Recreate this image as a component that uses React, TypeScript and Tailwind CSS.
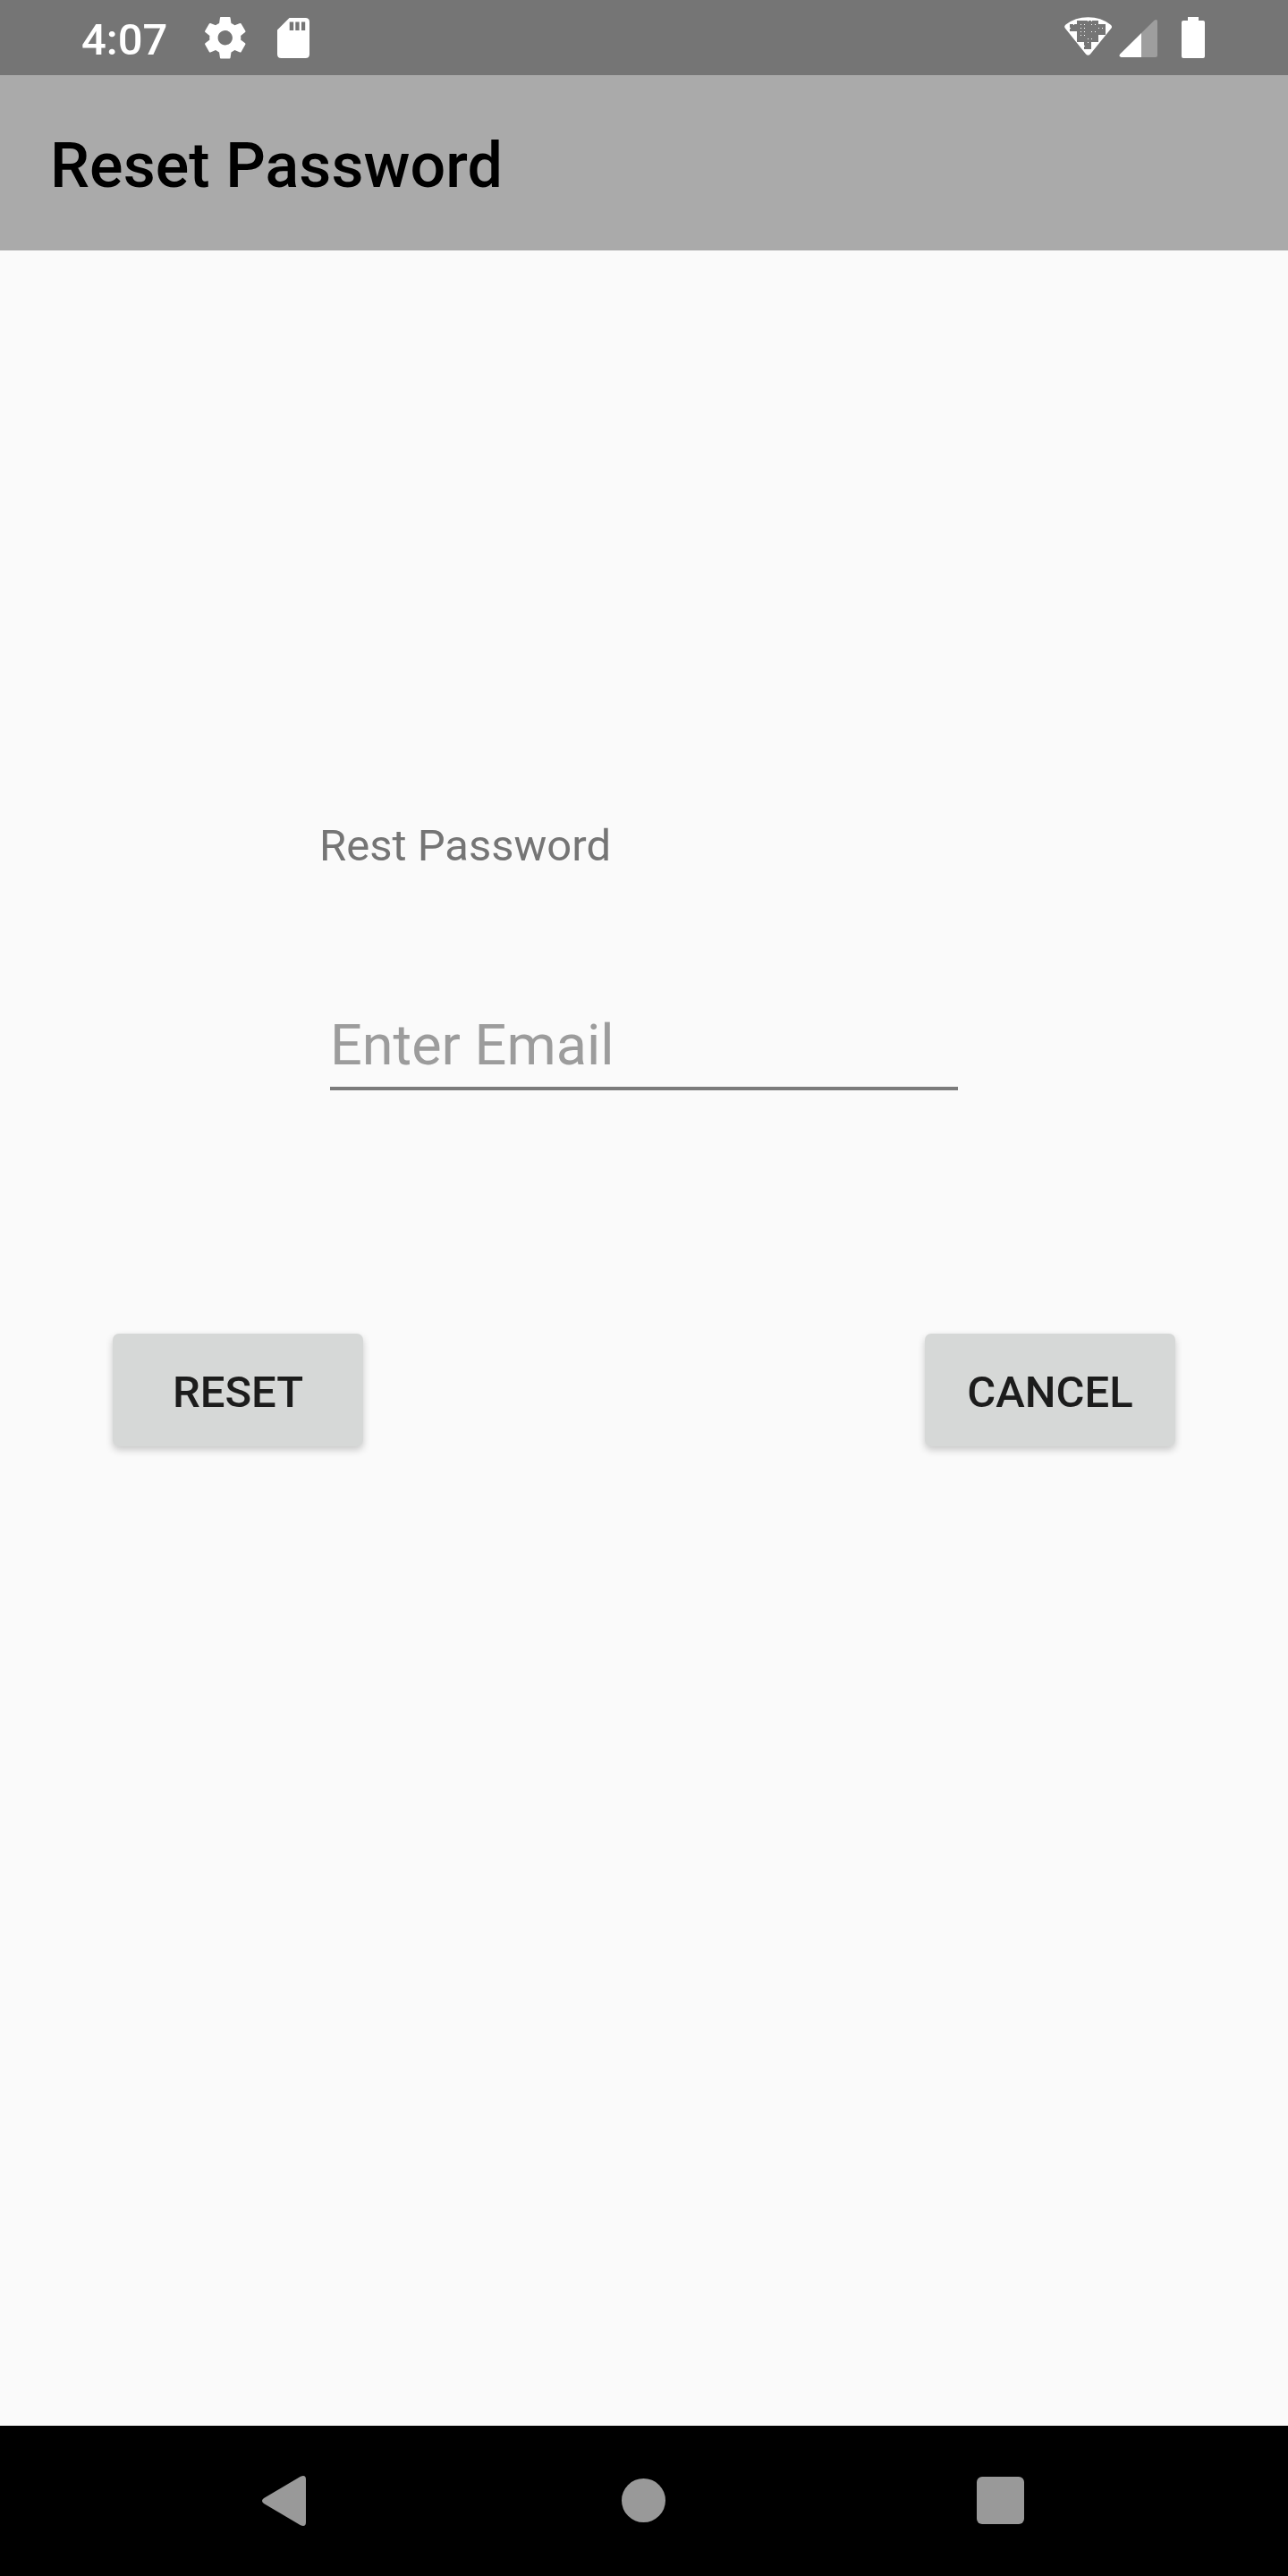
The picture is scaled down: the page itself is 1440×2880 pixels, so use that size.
const WIFI_DOTS: [number, number][] = [
  [6, 13], [10, 9], [18, 9], [22, 9], [26, 5], [30, 5], [30, 9],
  [18, 13], [22, 13], [34, 9], [38, 13], [42, 13],
  [18, 17], [22, 17], [30, 17], [34, 17], [18, 21], [22, 21],
  [26, 25], [30, 25], [26, 29], [22, 33],
];

function SettingsIcon() {
  return (
    <svg className="h-[56px] w-[56px]" viewBox="-1.8 -0.25 24 24" fill="#fff">
      <path transform="translate(-1.9 -0.15)" d="M19.43 12.98c.04-.32.07-.64.07-.98s-.03-.66-.07-.98l2.11-1.65c.19-.15.24-.42.12-.64l-2-3.46c-.12-.22-.39-.3-.61-.22l-2.49 1c-.52-.4-1.08-.73-1.69-.98l-.38-2.65C14.46 2.18 14.25 2 14 2h-4c-.25 0-.46.18-.49.42l-.38 2.65c-.61.25-1.17.59-1.69.98l-2.49-1c-.23-.09-.49 0-.61.22l-2 3.46c-.13.22-.07.49.12.64l2.11 1.65c-.04.32-.07.65-.07.98s.03.66.07.98l-2.11 1.65c-.19.15-.24.42-.12.64l2 3.46c.12.22.39.3.61.22l2.49-1c.52.4 1.08.73 1.69.98l.38 2.65c.03.24.24.42.49.42h4c.25 0 .46-.18.49-.42l.38-2.65c.61-.25 1.17-.59 1.69-.98l2.49 1c.23.09.49 0 .61-.22l2-3.46c.12-.22.07-.49-.12-.64l-2.11-1.65zM12 15.5c-1.93 0-3.5-1.57-3.5-3.5s1.57-3.5 3.5-3.5 3.5 1.57 3.5 3.5-1.57 3.5-3.5 3.5z" />
    </svg>
  );
}

export default function App() {
  return (
    <div className="flex h-[2880px] w-[1440px] flex-col bg-[#fafafa] font-['Roboto',sans-serif]">
      <div className="flex h-[84px] shrink-0 justify-between bg-[#757575] text-white">
        <div className="flex">
          <span className="ml-[91px] mt-[16px] w-[133px] text-[49px] font-medium leading-[57px]">4:07</span>
          <div className="mt-[14px]">
            <SettingsIcon />
          </div>
          <svg className="ml-[30px] mt-[20px] h-[45px] w-[36px]" viewBox="0 0 36 45">
            <path fill="#fff" fillRule="evenodd" d="M13.500 0H31.500Q36 0 36 4.500V40.500Q36 45 31.500 45H4.500Q0 45 0 40.500V13.500ZM13.700 4.500V14H18.200V4.500ZM20.300 4.500V14H24.600V4.500ZM27 4.500V14H31.200V4.500Z" />
          </svg>
        </div>
        <div className="flex">
          <svg className="mt-[18px] h-[45px] w-[54px]" viewBox="0 0 54 45">
            <path fill="#fff" d="M1.500 9.500Q12 1.200 26.500 1.200T51.500 9.500Q54 11.500 52.500 13.500L29 42.500Q26.500 45 24 42.500L.8 13.500Q-.8 11.500 1.500 9.500Z" />
            <path fill="#757575" d="M14 5H38V9H46V21H38V29H30V37H22V29H14V17H6V9H14Z" />
            {WIFI_DOTS.map(([x, y]) => (
              <rect key={`${x}-${y}`} x={x} y={y} width="1" height="1" fill="#fff" />
            ))}
          </svg>
          <svg className="ml-[7px] mt-[22px] h-[42px] w-[43px]" viewBox="0 0 43 42">
            <path fill="#9e9e9e" d="M43 2V40Q43 42 41 42H25V15L39.500 .7Q43-1 43 2Z" />
            <path fill="#fff" d="M25 15V42H2.500Q-.5 41.500 1.200 38.500Z" />
          </svg>
          <svg className="ml-[27px] mr-[93px] mt-[19px] h-[46px] w-[26px]" viewBox="0 0 26 46">
            <path fill="#fff" d="M7 0H19V4H24Q26 4 26 6V44Q26 46 24 46H2Q0 46 0 44V6Q0 4 2 4H7Z" />
          </svg>
        </div>
      </div>
      <header className="flex h-[196px] shrink-0 items-center bg-[#aaaaaa] px-14 pt-[6px]">
        <h1 className="text-[70px] font-medium leading-[82px] tracking-[0.06px] text-black">Reset Password</h1>
      </header>
      <main className="flex grow flex-col">
        <p className="ml-[357px] mt-[637px] text-[49px] leading-[57px] text-[#757575]">Rest Password</p>
        <div className="ml-[369px] mt-[156px] h-[89px] w-[702px] border-b-4 border-[#7b7b7b] pt-[2px]">
          <input
            type="email"
            placeholder="Enter Email"
            className="block h-[74px] w-full bg-transparent text-[63px] leading-[74px] outline-none placeholder:text-[#9c9c9c]"
          />
        </div>
        <div className="mt-[272px] flex justify-between pl-[126px] pr-[126px]">
          <button className="h-[126px] w-[280px] rounded-[7px] bg-[#d6d8d7] pt-[5px] text-[49px] font-medium text-[#1c1c1c] shadow-[0_4px_8px_rgba(0,0,0,0.2)]">RESET</button>
          <button className="h-[126px] w-[280px] rounded-[7px] bg-[#d6d8d7] pt-[5px] text-[49px] font-medium text-[#1c1c1c] shadow-[0_4px_8px_rgba(0,0,0,0.2)]">CANCEL</button>
        </div>
      </main>
      <nav className="flex h-[168px] shrink-0 items-start bg-black">
        <svg className="ml-[293px] mt-[56px] h-[56px] w-[49px]" viewBox="0 0 49 56">
          <path fill="#999" d="M43 .8Q49-1.500 49 4V52Q49 57.500 43 55.200L2 31Q-2 28 2 25Z" />
        </svg>
        <div className="ml-[353px] mt-[59px] h-[49px] w-[49px] rounded-full bg-[#999]" />
        <div className="ml-[348px] mt-[57px] h-[53px] w-[53px] rounded-[6px] bg-[#999]" />
      </nav>
    </div>
  );
}
